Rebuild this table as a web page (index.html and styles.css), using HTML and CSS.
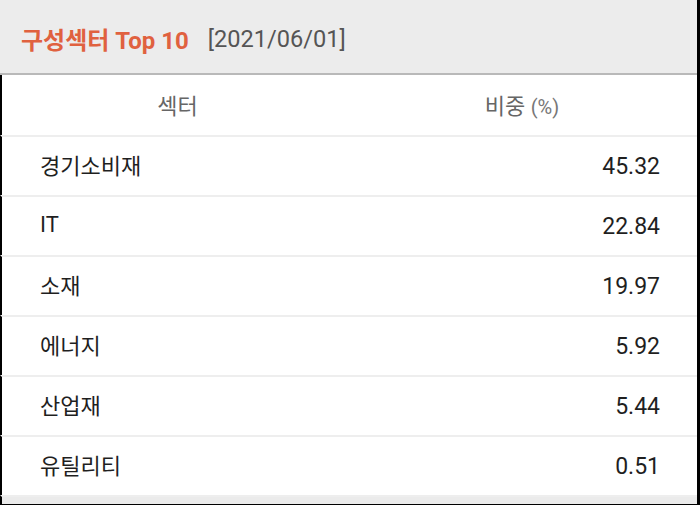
FILE: index.html
```html
<!DOCTYPE html>
<html lang="ko">
<head>
<meta charset="utf-8">
<link rel="stylesheet" href="styles.css">
</head>
<body>
<div class="frame">
  <header class="head">
    <span class="title">구성섹터 Top 10</span>
    <span class="date">[2021/06/01]</span>
  </header>
  <div class="table">
    <div class="row th">
      <div class="c1">섹터</div>
      <div class="c2">비중 <span class="pct">(%)</span></div>
    </div>
    <div class="row"><div class="name">경기소비재</div><div class="val">45.32</div></div>
    <div class="row"><div class="name">IT</div><div class="val">22.84</div></div>
    <div class="row"><div class="name">소재</div><div class="val">19.97</div></div>
    <div class="row"><div class="name">에너지</div><div class="val">5.92</div></div>
    <div class="row"><div class="name">산업재</div><div class="val">5.44</div></div>
    <div class="row"><div class="name">유틸리티</div><div class="val">0.51</div></div>
  </div>
  <div class="foot"></div>
</div>
</body>
</html>
```

FILE: styles.css
```css
html, body {
  margin: 0;
  padding: 0;
  background: #000;
}
body {
  width: 700px;
  height: 505px;
  overflow: hidden;
  font-family: Roboto, "Noto Sans CJK KR", sans-serif;
}
.frame {
  width: 697px;
  height: 504px;
  background: #fff;
  display: flex;
  flex-direction: column;
}
.head {
  flex: 0 0 auto;
  height: 73px;
  box-sizing: border-box;
  padding: 4px 0 0 21px;
  background: #ececec;
  display: flex;
  align-items: center;
}
.title {
  color: #e0613f;
  font-weight: 700;
  font-size: 24px;
}
.date {
  color: #555;
  font-size: 23.6px;
  margin-left: 19px;
}
.table {
  flex: 0 0 auto;
  border-top: 2px solid #b9b9b9;
  display: flex;
  flex-direction: column;
}
.row {
  flex: 0 0 auto;
  height: 60px;
  box-sizing: border-box;
  border-left: 2px solid #000;
  display: flex;
  align-items: center;
  border-top: 2px solid #eeeeee;
  color: #1f1f1f;
  font-size: 22px;
}
.row.th {
  height: 60px;
  border-top: none;
  color: #666;
  font-size: 22px;
}
.c1 {
  width: 351px;
  text-align: center;
  padding-bottom: 3px;
}
.c2 {
  flex: 1;
  text-align: center;
  padding-right: 6px;
  padding-bottom: 3px;
}
.pct {
  font-size: 20px;
  color: #777;
}
.name {
  flex: 1;
  padding-left: 38px;
  padding-bottom: 4px;
}
.val {
  font-size: 23px;
  padding-right: 37px;
}
.foot {
  flex: 1 1 auto;
  background: #ebebeb;
  border-left: 2px solid #000;
  border-top: 2px solid #eeeeee;
}
```
